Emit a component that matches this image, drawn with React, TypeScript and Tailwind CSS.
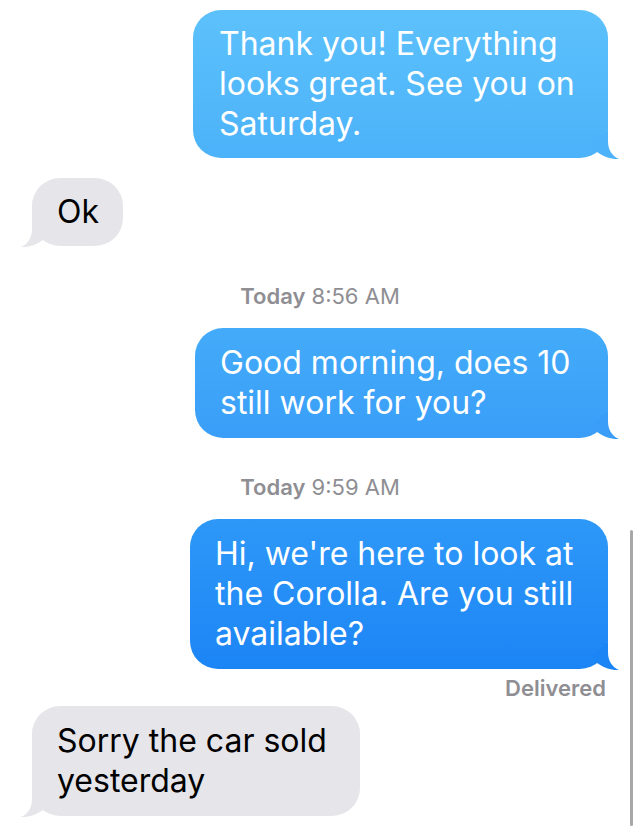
import React from "react";

const font = { fontFamily: 'Inter, "Liberation Sans", Arial, sans-serif' };

function RightTail({ color }: { color: string }) {
  return (
    <svg
      className="absolute right-[-12px] bottom-[-3px]"
      width="36"
      height="30"
      viewBox="0 0 36 30"
    >
      <path
        d="M24 0 L24 10 C24 19 28 25 35 28 C28 28.6 20 26 13 21 L8 14 Z"
        fill={color}
      />
    </svg>
  );
}

function LeftTail({ color }: { color: string }) {
  return (
    <svg
      className="absolute left-[-12px] bottom-[-3px]"
      width="36"
      height="30"
      viewBox="0 0 36 30"
    >
      <path
        d="M12 0 L12 10 C12 19 8 25 1 28 C8 28.6 16 26 23 21 L28 14 Z"
        fill={color}
      />
    </svg>
  );
}

export default function App() {
  return (
    <div
      className="relative w-[640px] h-[832px] overflow-hidden bg-white"
      style={font}
    >
      <div className="flex flex-col pt-[10px] px-[32px]">
        {/* Bubble 1 */}
        <div className="self-end relative w-[415px] rounded-[28px] bg-gradient-to-b from-[#5cc1fb] to-[#4cb2f9] pl-[26px] pr-[8px] py-[14px] text-white text-[32px] leading-[40px]">
          Thank you! Everything
          <br />
          looks great. See you on
          <br />
          Saturday.
          <RightTail color="#4cb2f9" />
        </div>

        {/* Ok */}
        <div className="self-start relative mt-[20px] w-[91px] h-[68px] rounded-[28px] bg-[#e5e5ea] pl-[25px] py-[14px] text-black text-[32px] leading-[40px]">
          Ok
          <LeftTail color="#e5e5ea" />
        </div>

        {/* Timestamp 1 */}
        <div className="mt-[38px] text-center text-[22px] leading-[24px] text-[#8e8e93]">
          <span className="font-semibold">Today</span> 8:56 AM
        </div>

        {/* Bubble 2 */}
        <div className="self-end relative mt-[20px] w-[413px] rounded-[28px] bg-gradient-to-b from-[#43abf9] to-[#3a9ef8] pl-[25px] pr-[8px] py-[15px] text-white text-[32px] leading-[40px]">
          Good morning, does 10
          <br />
          still work for you?
          <RightTail color="#3a9ef8" />
        </div>

        {/* Timestamp 2 */}
        <div className="mt-[37px] text-center text-[22px] leading-[24px] text-[#8e8e93]">
          <span className="font-semibold">Today</span> 9:59 AM
        </div>

        {/* Bubble 3 */}
        <div className="self-end relative mt-[20px] w-[418px] rounded-[28px] bg-gradient-to-b from-[#2e98f8] to-[#1c85f5] pl-[25px] pr-[8px] py-[15px] text-white text-[32px] leading-[40px]">
          Hi, we're here to look at
          <br />
          the Corolla. Are you still
          <br />
          available?
          <RightTail color="#1c85f5" />
        </div>

        {/* Delivered */}
        <div className="self-end mt-[8px] text-[22px] leading-[22px] font-semibold text-[#8e8e93] pr-[2px]">
          Delivered
        </div>

        {/* Bubble 4 */}
        <div className="self-start relative mt-[7px] w-[328px] rounded-[28px] bg-[#e5e5ea] pl-[25px] pr-[8px] py-[15px] text-black text-[32px] leading-[40px]">
          Sorry the car sold
          <br />
          yesterday
          <LeftTail color="#e5e5ea" />
        </div>
      </div>

      {/* Scroll indicator */}
      <div className="absolute left-[630px] top-[530px] w-[3px] h-[296px] rounded-full bg-[#a8a8a8]" />
    </div>
  );
}
